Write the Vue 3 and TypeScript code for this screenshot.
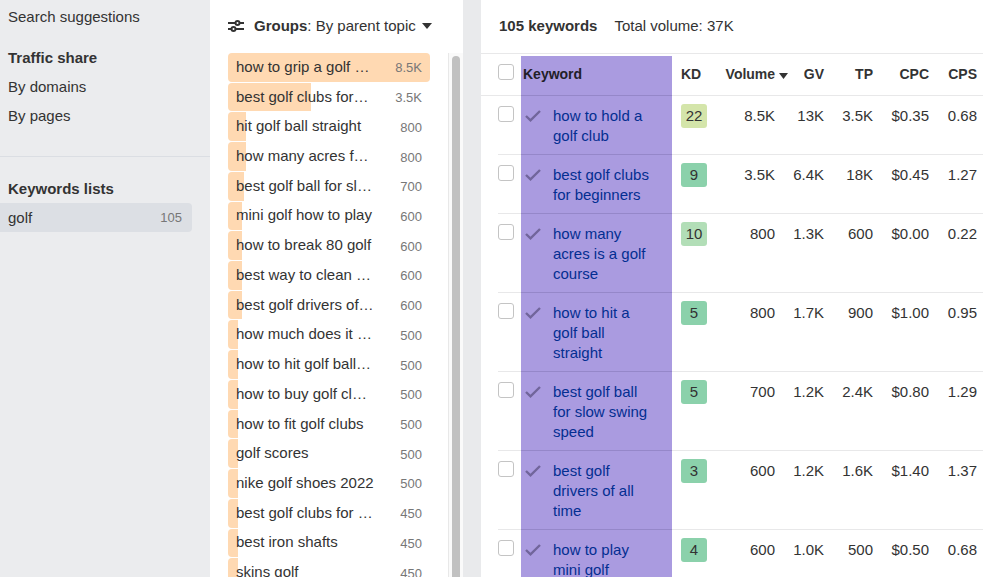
<script setup lang="ts">
interface Group {
  name: string
  count: string
  bar: number
}

interface Row {
  keyword: string
  kd: number
  level: 'easy' | 'mild' | 'medium'
  values: string[]
}

const groups: Group[] = [
  { name: 'how to grip a golf …', count: '8.5K', bar: 100 },
  { name: 'best golf clubs for…', count: '3.5K', bar: 41 },
  { name: 'hit golf ball straight', count: '800', bar: 9 },
  { name: 'how many acres f…', count: '800', bar: 9 },
  { name: 'best golf ball for sl…', count: '700', bar: 8 },
  { name: 'mini golf how to play', count: '600', bar: 7 },
  { name: 'how to break 80 golf', count: '600', bar: 7 },
  { name: 'best way to clean …', count: '600', bar: 7 },
  { name: 'best golf drivers of…', count: '600', bar: 7 },
  { name: 'how much does it …', count: '500', bar: 5 },
  { name: 'how to hit golf ball…', count: '500', bar: 5 },
  { name: 'how to buy golf cl…', count: '500', bar: 5 },
  { name: 'how to fit golf clubs', count: '500', bar: 5 },
  { name: 'golf scores', count: '500', bar: 5 },
  { name: 'nike golf shoes 2022', count: '500', bar: 5 },
  { name: 'best golf clubs for …', count: '450', bar: 5 },
  { name: 'best iron shafts', count: '450', bar: 5 },
  { name: 'skins golf', count: '450', bar: 5 },
]

const rows: Row[] = [
  { keyword: 'how to hold a golf club', kd: 22, level: 'medium', values: ['8.5K', '13K', '3.5K', '$0.35', '0.68'] },
  { keyword: 'best golf clubs for beginners', kd: 9, level: 'easy', values: ['3.5K', '6.4K', '18K', '$0.45', '1.27'] },
  { keyword: 'how many acres is a golf course', kd: 10, level: 'mild', values: ['800', '1.3K', '600', '$0.00', '0.22'] },
  { keyword: 'how to hit a golf ball straight', kd: 5, level: 'easy', values: ['800', '1.7K', '900', '$1.00', '0.95'] },
  { keyword: 'best golf ball for slow swing speed', kd: 5, level: 'easy', values: ['700', '1.2K', '2.4K', '$0.80', '1.29'] },
  { keyword: 'best golf drivers of all time', kd: 3, level: 'easy', values: ['600', '1.2K', '1.6K', '$1.40', '1.37'] },
  { keyword: 'how to play mini golf', kd: 4, level: 'easy', values: ['600', '1.0K', '500', '$0.50', '0.68'] },
]
</script>

<template>
  <div class="page">
    <nav class="sidebar">
      <div class="section">
        <a class="link" href="#">Search suggestions</a>
        <h2 class="heading">Traffic share</h2>
        <a class="link" href="#">By domains</a>
        <a class="link" href="#">By pages</a>
      </div>
      <div class="section lists">
        <h2 class="heading">Keywords lists</h2>
        <a class="link selected" href="#">golf <span class="total">105</span></a>
      </div>
    </nav>

    <section class="groups">
      <button class="picker" type="button">
        <svg class="sliders" viewBox="0 0 16 14" aria-hidden="true">
          <g fill="none" stroke="currentColor" stroke-width="2">
            <path d="M0 4H7M12 4H16M0 10H3M8 10H16" />
            <circle cx="9.5" cy="4" r="2" />
            <circle cx="5.5" cy="10" r="2" />
          </g>
        </svg>
        <span><b>Groups</b>: By parent topic</span>
        <svg class="caret" viewBox="0 0 10 6" aria-hidden="true"><path d="M0 0H10L5 6Z" fill="currentColor" /></svg>
      </button>
      <div class="scroller">
        <ul class="list">
          <li v-for="g in groups" :key="g.name" class="group">
            <span class="bar" :class="{ full: g.bar === 100 }" :style="{ width: g.bar + '%' }"></span>
            <span class="name">{{ g.name }}</span>
            <span class="count">{{ g.count }}</span>
          </li>
        </ul>
        <div class="track"><div class="thumb"></div></div>
      </div>
    </section>

    <main class="keywords">
      <header class="summary">
        <b>105 keywords</b>
        <span>Total volume: 37K</span>
      </header>
      <table class="table">
        <colgroup>
          <col class="c-edge" />
          <col class="c-check" />
          <col />
          <col class="c-kd" />
          <col class="c-volume" />
          <col class="c-gv" />
          <col class="c-tp" />
          <col class="c-cpc" />
          <col class="c-cps" />
        </colgroup>
        <thead>
          <tr>
            <th class="check"><input type="checkbox" aria-label="Select all keywords" /></th>
            <th class="keyword">Keyword</th>
            <th class="kd">KD</th>
            <th class="sorted">
              Volume
              <svg class="sort" viewBox="0 0 9 6" aria-hidden="true"><path d="M0 0H9L4.5 6Z" fill="currentColor" /></svg>
            </th>
            <th>GV</th>
            <th>TP</th>
            <th>CPC</th>
            <th>CPS</th>
          </tr>
        </thead>
        <tbody>
          <tr v-for="r in rows" :key="r.keyword">
            <td class="check"><input type="checkbox" :aria-label="r.keyword" /></td>
            <td class="keyword">
              <div class="entry">
                <svg class="tick" viewBox="0 0 16 12" aria-hidden="true">
                  <path d="M1 6L5.5 10.3L15 1" fill="none" stroke="currentColor" stroke-width="2.4" />
                </svg>
                <a href="#">{{ r.keyword }}</a>
              </div>
            </td>
            <td class="kd"><span class="badge" :class="r.level">{{ r.kd }}</span></td>
            <td v-for="(v, i) in r.values" :key="i">{{ v }}</td>
          </tr>
        </tbody>
      </table>
    </main>
  </div>
</template>

<style>
body {
  margin: 0;
  overflow: hidden;
}
</style>

<style scoped>
.page {
  display: flex;
  height: 100vh;
  overflow: hidden;
  background: #e9eaec;
  color: #333;
  font: 15px/20px "Liberation Sans", Arial, Helvetica, sans-serif;
}

.sidebar {
  flex: none;
  width: 210px;
  background: #ebecee;
}

.section {
  padding: 2px 18px 26px 0;
}

.lists {
  padding-top: 17px;
  border-top: 1px solid #dbdee3;
}

.link,
.heading {
  display: block;
  margin: 0;
  padding: 0 8px;
  font-size: 15px;
  line-height: 29px;
  color: #333;
  text-decoration: none;
}

.link + .heading {
  margin-top: 12px;
}

.selected {
  display: flex;
  justify-content: space-between;
  padding-right: 10px;
  border-radius: 0 4px 4px 0;
  background: #dcdfe4;
}

.total {
  font-size: 13px;
  color: #777;
}

.groups {
  flex: none;
  display: flex;
  flex-direction: column;
  width: 253px;
  margin-right: 18px;
  background: #fff;
}

.picker {
  flex: none;
  display: flex;
  align-items: center;
  height: 53px;
  padding: 0 18px 2px;
  border: 0;
  background: none;
  color: #333;
  font: inherit;
}

.sliders {
  width: 16px;
  height: 14px;
  margin-right: 10px;
}

.caret {
  width: 10px;
  height: 6px;
  margin-left: 6px;
}

.scroller {
  flex: 1;
  display: flex;
  min-height: 0;
}

.list {
  flex: 1;
  display: grid;
  grid-auto-rows: 1fr;
  height: 535px;
  margin: 0 18px;
  padding: 0;
  list-style: none;
}

.group {
  position: relative;
  display: flex;
  align-items: center;
  justify-content: space-between;
  padding: 0 8px 2px;
}

.bar {
  position: absolute;
  inset: 0 auto 1px 0;
  border-radius: 4px 0 0 4px;
  background: #ffd9b2;
}

.full {
  border-radius: 4px;
}

.name,
.count {
  position: relative;
  white-space: nowrap;
}

.count {
  padding-top: 3px;
  font-size: 13px;
  color: #777;
}

.track {
  width: 14px;
  border-left: 1px solid #e8e8e8;
  background: #fafafa;
}

.thumb {
  width: 8px;
  height: 100%;
  margin: 3px 3px 0;
  border-radius: 4px;
  background: #c1c1c1;
}

.keywords {
  flex: 1;
  min-width: 0;
  background: #fff;
}

.summary {
  display: flex;
  align-items: center;
  gap: 17px;
  height: 51px;
  margin-bottom: 2px;
  padding: 0 0 2px 18px;
  border-bottom: 1px solid #e8e8e9;
}

.table {
  width: 100%;
  table-layout: fixed;
  border-collapse: separate;
  border-spacing: 0;
}

.c-edge { width: 17px; }
.c-check { width: 23px; }
.c-kd { width: 43px; }
.c-volume { width: 73px; }
.c-gv { width: 36px; }
.c-tp { width: 49px; }
.c-cpc { width: 56px; }
.c-cps { width: 54px; }

/* Left gutter: the header rule crosses it, the row rules do not. */
tr::before {
  content: "";
  display: table-cell;
}

thead tr::before,
th,
td {
  border-bottom: 1px solid #e8e8e9;
}

th,
td {
  padding: 10px 0 8px;
  text-align: right;
  vertical-align: top;
  white-space: nowrap;
}

th {
  padding: 8px 0 11px;
  font-size: 14px;
}

td:nth-child(4) {
  padding-right: 13px;
}

th:last-child,
td:last-child {
  padding-right: 6px;
}

.check,
.keyword,
.kd {
  text-align: left;
}

.check input {
  appearance: none;
  display: block;
  width: 16px;
  height: 16px;
  margin: 0;
  border: 1px solid #c4c4c4;
  border-radius: 3px;
  background: #fff;
}

.keyword {
  border-bottom-color: #9587c9;
  background: #aa9be0;
}

th.keyword {
  padding-left: 2px;
  color: #222028;
}

td.keyword {
  padding-right: 17px;
  white-space: normal;
}

.entry {
  display: flex;
  align-items: flex-start;
}

.tick {
  flex: none;
  width: 16px;
  height: 12px;
  margin: 4px 12px 0 4px;
  color: #71659b;
}

.entry a {
  color: #032e91;
  text-decoration: none;
}

th.kd,
td.kd {
  padding-left: 9px;
}

.badge {
  display: block;
  width: 26px;
  margin: -2px 0;
  border-radius: 3px;
  line-height: 24px;
  text-align: center;
}

.easy { background: #8bd1ab; }
.mild { background: #b2deb7; }
.medium { background: #d4e5aa; }

.sort {
  width: 9px;
  height: 6px;
}
</style>
